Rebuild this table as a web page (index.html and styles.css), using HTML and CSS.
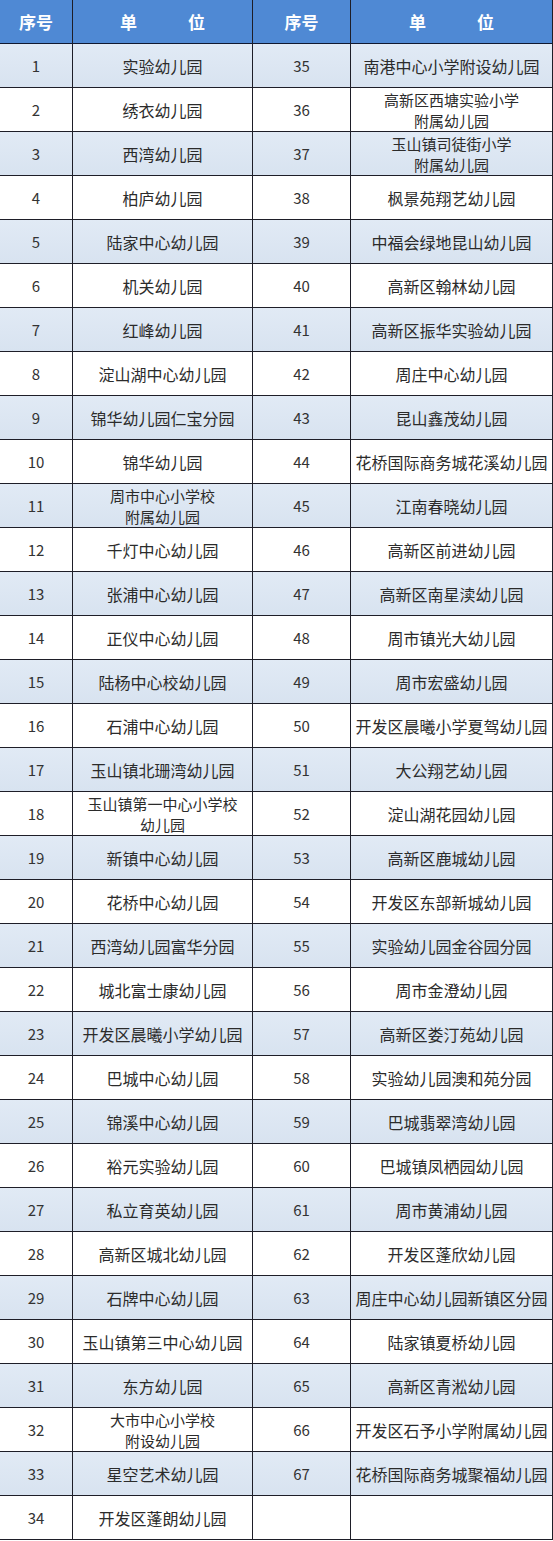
FILE: index.html
```html
<!DOCTYPE html>
<html lang="zh-CN">
<head>
<meta charset="utf-8">
<title>幼儿园名单</title>
<link rel="stylesheet" href="styles.css">
</head>
<body>
<table class="list">
  <colgroup>
    <col class="c-no">
    <col class="c-name">
    <col class="c-no2">
    <col class="c-name2">
  </colgroup>
  <thead>
    <tr class="head">
      <th>序号</th><th>单　　　位</th><th>序号</th><th>单　　　位</th>
    </tr>
  </thead>
  <tbody>
    <tr class="alt"><td>1</td><td>实验幼儿园</td><td>35</td><td>南港中心小学附设幼儿园</td></tr>
    <tr><td>2</td><td>绣衣幼儿园</td><td>36</td><td class="two"><span class="ln">高新区西塘实验小学</span><span class="ln">附属幼儿园</span></td></tr>
    <tr class="alt"><td>3</td><td>西湾幼儿园</td><td>37</td><td class="two"><span class="ln">玉山镇司徒街小学</span><span class="ln">附属幼儿园</span></td></tr>
    <tr><td>4</td><td>柏庐幼儿园</td><td>38</td><td>枫景苑翔艺幼儿园</td></tr>
    <tr class="alt"><td>5</td><td>陆家中心幼儿园</td><td>39</td><td>中福会绿地昆山幼儿园</td></tr>
    <tr><td>6</td><td>机关幼儿园</td><td>40</td><td>高新区翰林幼儿园</td></tr>
    <tr class="alt"><td>7</td><td>红峰幼儿园</td><td>41</td><td>高新区振华实验幼儿园</td></tr>
    <tr><td>8</td><td>淀山湖中心幼儿园</td><td>42</td><td>周庄中心幼儿园</td></tr>
    <tr class="alt"><td>9</td><td>锦华幼儿园仁宝分园</td><td>43</td><td>昆山鑫茂幼儿园</td></tr>
    <tr><td>10</td><td>锦华幼儿园</td><td>44</td><td>花桥国际商务城花溪幼儿园</td></tr>
    <tr class="alt"><td>11</td><td class="two"><span class="ln">周市中心小学校</span><span class="ln">附属幼儿园</span></td><td>45</td><td>江南春晓幼儿园</td></tr>
    <tr><td>12</td><td>千灯中心幼儿园</td><td>46</td><td>高新区前进幼儿园</td></tr>
    <tr class="alt"><td>13</td><td>张浦中心幼儿园</td><td>47</td><td>高新区南星渎幼儿园</td></tr>
    <tr><td>14</td><td>正仪中心幼儿园</td><td>48</td><td>周市镇光大幼儿园</td></tr>
    <tr class="alt"><td>15</td><td>陆杨中心校幼儿园</td><td>49</td><td>周市宏盛幼儿园</td></tr>
    <tr><td>16</td><td>石浦中心幼儿园</td><td>50</td><td>开发区晨曦小学夏驾幼儿园</td></tr>
    <tr class="alt"><td>17</td><td>玉山镇北珊湾幼儿园</td><td>51</td><td>大公翔艺幼儿园</td></tr>
    <tr><td>18</td><td class="two"><span class="ln">玉山镇第一中心小学校</span><span class="ln">幼儿园</span></td><td>52</td><td>淀山湖花园幼儿园</td></tr>
    <tr class="alt"><td>19</td><td>新镇中心幼儿园</td><td>53</td><td>高新区鹿城幼儿园</td></tr>
    <tr><td>20</td><td>花桥中心幼儿园</td><td>54</td><td>开发区东部新城幼儿园</td></tr>
    <tr class="alt"><td>21</td><td>西湾幼儿园富华分园</td><td>55</td><td>实验幼儿园金谷园分园</td></tr>
    <tr><td>22</td><td>城北富士康幼儿园</td><td>56</td><td>周市金澄幼儿园</td></tr>
    <tr class="alt"><td>23</td><td>开发区晨曦小学幼儿园</td><td>57</td><td>高新区娄汀苑幼儿园</td></tr>
    <tr><td>24</td><td>巴城中心幼儿园</td><td>58</td><td>实验幼儿园澳和苑分园</td></tr>
    <tr class="alt"><td>25</td><td>锦溪中心幼儿园</td><td>59</td><td>巴城翡翠湾幼儿园</td></tr>
    <tr><td>26</td><td>裕元实验幼儿园</td><td>60</td><td>巴城镇凤栖园幼儿园</td></tr>
    <tr class="alt"><td>27</td><td>私立育英幼儿园</td><td>61</td><td>周市黄浦幼儿园</td></tr>
    <tr><td>28</td><td>高新区城北幼儿园</td><td>62</td><td>开发区蓬欣幼儿园</td></tr>
    <tr class="alt"><td>29</td><td>石牌中心幼儿园</td><td>63</td><td>周庄中心幼儿园新镇区分园</td></tr>
    <tr><td>30</td><td>玉山镇第三中心幼儿园</td><td>64</td><td>陆家镇夏桥幼儿园</td></tr>
    <tr class="alt"><td>31</td><td>东方幼儿园</td><td>65</td><td>高新区青淞幼儿园</td></tr>
    <tr><td>32</td><td class="two"><span class="ln">大市中心小学校</span><span class="ln">附设幼儿园</span></td><td>66</td><td>开发区石予小学附属幼儿园</td></tr>
    <tr class="alt"><td>33</td><td>星空艺术幼儿园</td><td>67</td><td>花桥国际商务城聚福幼儿园</td></tr>
    <tr><td>34</td><td>开发区蓬朗幼儿园</td><td></td><td></td></tr>
  </tbody>
</table>
</body>
</html>
```

FILE: styles.css
```css
html, body {
  margin: 0;
  padding: 0;
  background: #ffffff;
}

.list {
  width: 553px;
  table-layout: fixed;
  border-collapse: separate;
  border-spacing: 0;
  font-family: "Noto Sans CJK SC", "Noto Sans", sans-serif;
  font-size: 16px;
  color: #2b2b2b;
}

.c-no { width: 73px; }
.c-name { width: 180px; }
.c-no2 { width: 98px; }
.c-name2 { width: 202px; }

.list th,
.list td {
  box-sizing: border-box;
  height: 44px;
  padding: 0 1px;
  text-align: center;
  vertical-align: middle;
  border-right: 1px solid #1e1e28;
  border-bottom: 1px solid #1e1e28;
  white-space: nowrap;
  line-height: 20px;
}

.list td:nth-child(odd) {
  font-size: 15px;
  color: #333333;
}

.head th {
  background: #4f89d4;
  color: #ffffff;
  font-weight: 700;
  font-size: 17px;
  border-bottom-color: #101830;
}

.alt td {
  background: linear-gradient(180deg, #e1eaf5 0%, #d8e3f0 100%);
}

.list td.two {
  font-size: 15px;
  padding: 0 1px;
  line-height: 21px;
}

.ln {
  display: block;
  height: 21px;
  line-height: 21px;
}
```
